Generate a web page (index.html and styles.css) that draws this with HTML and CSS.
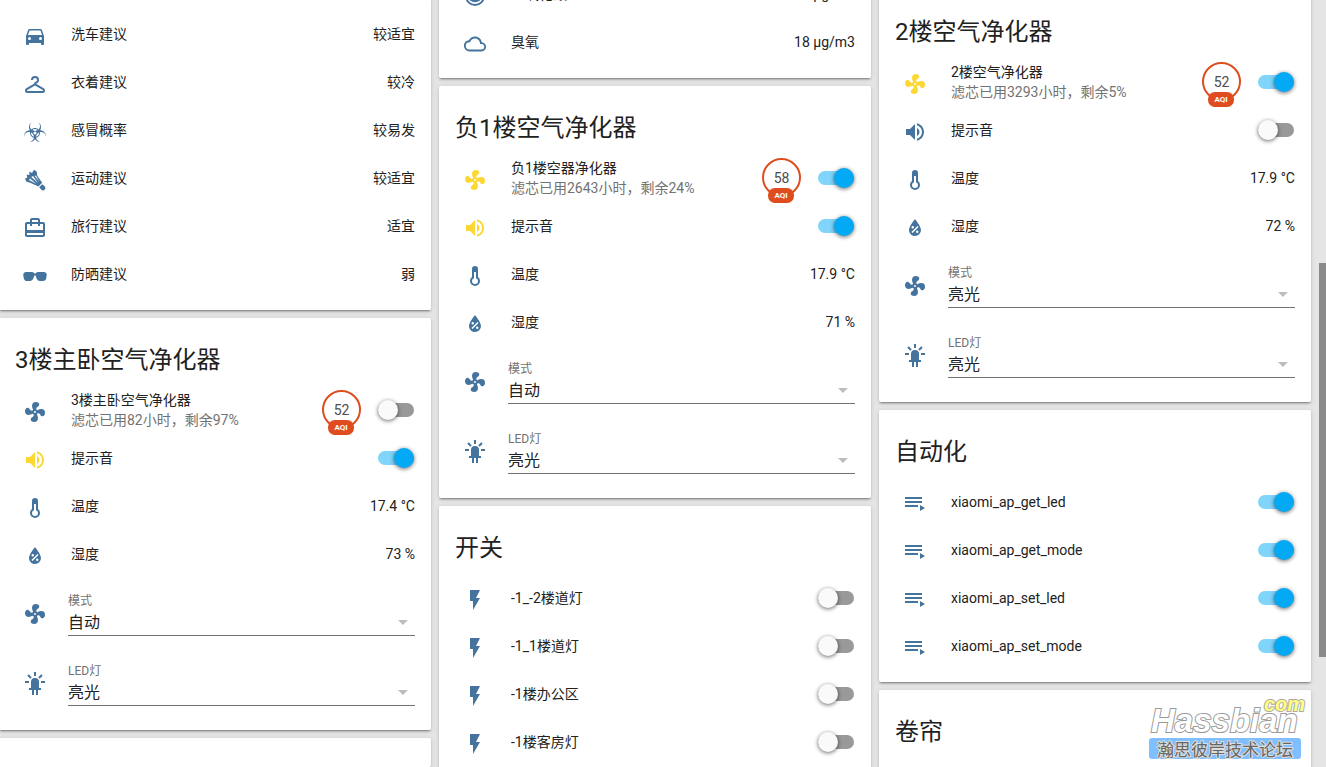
FILE: index.html
```html
<!DOCTYPE html>
<html lang="zh-CN">
<head>
<meta charset="utf-8">
<title>Home Assistant</title>
<link rel="stylesheet" href="styles.css">
</head>
<body>
<svg class="sprite" aria-hidden="true">
  <symbol id="car" viewBox="0 0 24 24"><path d="M5,11L6.5,6.5H17.5L19,11M17.5,16A1.5,1.5 0 0,1 16,14.5A1.5,1.5 0 0,1 17.5,13A1.5,1.5 0 0,1 19,14.5A1.5,1.5 0 0,1 17.5,16M6.5,16A1.5,1.5 0 0,1 5,14.5A1.5,1.5 0 0,1 6.5,13A1.5,1.5 0 0,1 8,14.5A1.5,1.5 0 0,1 6.5,16M18.92,6C18.72,5.42 18.16,5 17.5,5H6.5C5.84,5 5.28,5.42 5.08,6L3,12V20A1,1 0 0,0 4,21H5A1,1 0 0,0 6,20V19H18V20A1,1 0 0,0 19,21H20A1,1 0 0,0 21,20V12L18.92,6Z"/></symbol>
  <symbol id="hanger" viewBox="0 0 24 24"><path d="M20.76,16.34H20.75C21.5,16.77 22,17.58 22,18.5A2.5,2.5 0 0,1 19.5,21H4.5A2.5,2.5 0 0,1 2,18.5C2,17.58 2.5,16.77 3.25,16.34H3.24L11,11.86C11,11.86 11,11 12,10C13,10 14,9.1 14,8A2,2 0 0,0 12,6A2,2 0 0,0 10,8H8A4,4 0 0,1 12,4A4,4 0 0,1 16,8C16,9.86 14.73,11.42 13,11.87L20.76,16.34M4.5,19V19H19.5V19C19.67,19 19.84,18.91 19.93,18.75C20.07,18.5 20,18.21 19.75,18.07L12,13.59L4.25,18.07C4,18.21 3.93,18.5 4.07,18.75C4.16,18.91 4.33,19 4.5,19Z"/></symbol>
  <symbol id="biohazard" viewBox="0 0 24 24"><path d="M23,16.06C23,16.29 23,16.5 22.96,16.7C22.78,14.14 20.64,12.11 18,12.11C17.63,12.11 17.27,12.16 16.92,12.23C16.96,12.5 17,12.73 17,13C17,15.35 15.31,17.32 13.07,17.81C13.42,20.05 15.31,21.79 17.65,21.96C17.43,22 17.22,22 17,22C14.92,22 13.07,20.94 12,19.34C10.93,20.94 9.09,22 7,22C6.78,22 6.57,22 6.35,21.96C8.69,21.79 10.57,20.06 10.93,17.81C8.68,17.32 7,15.35 7,13C7,12.73 7.04,12.5 7.07,12.23C6.73,12.16 6.37,12.11 6,12.11C3.36,12.11 1.22,14.14 1.03,16.7C1,16.5 1,16.29 1,16.06C1,12.85 3.59,10.24 6.81,10.14C6.3,9.27 6,8.25 6,7.17C6,4.94 7.23,3 9.06,2C7.81,2.9 7,4.34 7,6C7,7.35 7.56,8.59 8.47,9.5C9.38,8.59 10.62,8.04 12,8.04C13.37,8.04 14.62,8.59 15.5,9.5C16.43,8.59 17,7.35 17,6C17,4.34 16.18,2.9 14.94,2C16.77,3 18,4.94 18,7.17C18,8.25 17.7,9.27 17.19,10.14C20.42,10.24 23,12.85 23,16.06M9.27,10.11C10.05,10.62 11,10.92 12,10.92C13,10.92 13.95,10.62 14.73,10.11C14,9.45 13.06,9.03 12,9.03C10.94,9.03 10,9.45 9.27,10.11M12,14.47C12.82,14.47 13.5,13.8 13.5,13A1.5,1.5 0 0,0 12,11.5A1.5,1.5 0 0,0 10.5,13C10.5,13.8 11.17,14.47 12,14.47M10.97,16.79C10.87,14.9 9.71,13.29 8.05,12.55C8.03,12.7 8,12.84 8,13C8,14.82 9.27,16.34 10.97,16.79M15.96,12.55C14.29,13.29 13.12,14.9 13,16.79C14.73,16.34 16,14.82 16,13C16,12.84 15.97,12.7 15.96,12.55Z"/></symbol>
  <symbol id="badminton" viewBox="0 0 24 24"><path fill-rule="evenodd" d="M2 10.400 4.200 9.800 3.700 6.400 6.300 7 6.400 3.500 9 5 11 1.800 13.800 3.800 14.200 7.800 19.200 14.800 15.400 18.600 7.200 14.800 3.200 13.600ZM6 12 13.500 15.900 7 10.600ZM8.200 9 14.900 15 10 7.900ZM11.800 8 16.300 13.900 13 7.600Z"/><path d="M19.200 16.200 21.600 18.200A2.400 2.400 0 0 1 18.400 21.800L16.200 19.300Z"/></symbol>
  <symbol id="travel" viewBox="0 0 24 24"><path d="M20,14H4V8H7V10H9V8H15V10H17V8H20M20,19H4V17H20M9,4H15V6H9M20,6H17V4C17,2.89 16.11,2 15,2H9C7.89,2 7,2.89 7,4V6H4C2.89,6 2,6.89 2,8V19C2,20.11 2.89,21 4,21H20C21.11,21 22,20.11 22,19V8C22,6.89 21.11,6 20,6Z"/></symbol>
  <symbol id="sunglasses" viewBox="0 0 24 24"><path d="M7,17H4C2.38,17 0.96,15.74 0.76,14.14L0.26,11.15C0.15,10.3 0.39,9.5 0.91,8.92C1.43,8.34 2.19,8 3,8H9C9.83,8 10.58,8.35 11.06,8.96C11.17,9.11 11.27,9.27 11.35,9.45C11.78,9.36 12.22,9.36 12.64,9.45C12.72,9.27 12.82,9.11 12.94,8.96C13.41,8.35 14.16,8 15,8H21C21.81,8 22.57,8.34 23.09,8.92C23.6,9.5 23.84,10.3 23.74,11.11L23.23,14.18C23.04,15.74 21.61,17 20,17H17C15.44,17 13.92,15.81 13.54,14.3L12.64,11.59C12.26,11.31 11.73,11.31 11.35,11.59L10.43,14.37C10.07,15.82 8.56,17 7,17Z"/></symbol>
  <symbol id="face" viewBox="0 0 24 24"><path fill-rule="evenodd" d="M12 2A10 10 0 1 0 12 22 10 10 0 0 0 12 2M12 4A8 8 0 1 1 12 20 8 8 0 0 1 12 4M7 14H17V16.500Q12 20 7 16.500Z"/></symbol>
  <symbol id="cloud" viewBox="-1 -1 26 26"><path d="M19,18H6A4,4 0 0,1 2,14A4,4 0 0,1 6,10H6.71C7.37,7.69 9.5,6 12,6A5.500,5.500 0 0,1 17.5,11.5V12H19A3,3 0 0,1 22,15A3,3 0 0,1 19,18M19.35,10.03C18.67,6.59 15.64,4 12,4C9.11,4 6.6,5.64 5.35,8.03C2.34,8.36 0,10.9 0,14A6,6 0 0,0 6,20H19A5,5 0 0,0 24,15C24,12.36 21.95,10.22 19.35,10.03Z"/></symbol>
  <symbol id="fan" viewBox="0 0 24 24"><path d="M12,11A1,1 0 0,0 11,12A1,1 0 0,0 12,13A1,1 0 0,0 13,12A1,1 0 0,0 12,11M12.5,2C17,2 17.11,5.57 14.75,6.75C13.76,7.24 13.32,8.29 13.13,9.22C13.61,9.42 14.03,9.73 14.35,10.13C18.05,8.13 22.03,8.92 22.03,12.5C22.03,17 18.46,17.1 17.28,14.73C16.78,13.74 15.72,13.3 14.79,13.11C14.59,13.59 14.28,14 13.88,14.34C15.87,18.03 15.08,22 11.5,22C7,22 6.91,18.42 9.27,17.24C10.25,16.75 10.69,15.71 10.89,14.79C10.4,14.59 9.97,14.27 9.65,13.87C5.96,15.85 2,15.07 2,11.5C2,7 5.56,6.89 6.74,9.26C7.24,10.25 8.29,10.68 9.22,10.87C9.41,10.39 9.73,9.97 10.14,9.65C8.15,5.96 8.94,2 12.5,2Z"/></symbol>
  <symbol id="volume" viewBox="0 0 24 24"><path d="M14,3.23V5.29C16.89,6.15 19,8.83 19,12C19,15.17 16.89,17.84 14,18.7V20.77C18,19.86 21,16.28 21,12C21,7.72 18,4.14 14,3.23M16.5,12C16.5,10.23 15.5,8.71 14,7.97V16C15.5,15.29 16.5,13.76 16.5,12M3,9V15H7L12,20V4L7,9H3Z"/></symbol>
  <symbol id="thermometer" viewBox="0 0 24 24"><path d="M17,17A5,5 0 0,1 12,22A5,5 0 0,1 7,17C7,15.36 7.79,13.91 9,13V5A3,3 0 0,1 12,2A3,3 0 0,1 15,5V13C16.21,13.91 17,15.36 17,17M11,8V14.17C9.83,14.58 9,15.69 9,17A3,3 0 0,0 12,20A3,3 0 0,0 15,17C15,15.69 14.17,14.58 13,14.17V8H11Z"/></symbol>
  <symbol id="humidity" viewBox="0 0 24 24"><path d="M12,3.25C12,3.25 6,10 6,14C6,17.32 8.69,20 12,20A6,6 0 0,0 18,14C18,10 12,3.25 12,3.25M14.47,9.97L15.53,11.03L9.53,17.03L8.47,15.97M9.75,10A1.25,1.25 0 0,1 11,11.25A1.25,1.25 0 0,1 9.75,12.5A1.25,1.25 0 0,1 8.5,11.25A1.25,1.25 0 0,1 9.75,10M14.25,14.5A1.25,1.25 0 0,1 15.5,15.75A1.25,1.25 0 0,1 14.25,17A1.25,1.25 0 0,1 13,15.75A1.25,1.25 0 0,1 14.25,14.5Z"/></symbol>
  <symbol id="led" viewBox="0 0 24 24"><path d="M11,0V4H13V0H11M18.3,2.29L15.24,5.29L16.64,6.71L19.7,3.71L18.3,2.29M5.71,2.29L4.29,3.71L7.29,6.71L8.71,5.29L5.71,2.29M12,6A4,4 0 0,0 8,10V16H6V18H9V23H11V18H13V23H15V18H18V16H16V10A4,4 0 0,0 12,6M2,9V11H6V9H2M18,9V11H22V9H18Z"/></symbol>
  <symbol id="flash" viewBox="0 0 24 24"><path d="M7,2V13H10V22L17,10H13L17,2H7Z"/></symbol>
  <symbol id="playlist" viewBox="0 0 24 24"><path d="M19,9H2V11H19V9M19,5H2V7H19V5M2,15H15V13H2V15M17,13V19L22,16L17,13Z"/></symbol>
</svg>

<main class="dashboard">
  <div class="column column-a">
    <section class="card card-continued">
      <div class="row"><svg class="icon"><use href="#car"/></svg><span class="name">洗车建议</span><span class="value">较适宜</span></div>
      <div class="row"><svg class="icon"><use href="#hanger"/></svg><span class="name">衣着建议</span><span class="value">较冷</span></div>
      <div class="row"><svg class="icon"><use href="#biohazard"/></svg><span class="name">感冒概率</span><span class="value">较易发</span></div>
      <div class="row"><svg class="icon"><use href="#badminton"/></svg><span class="name">运动建议</span><span class="value">较适宜</span></div>
      <div class="row"><svg class="icon"><use href="#travel"/></svg><span class="name">旅行建议</span><span class="value">适宜</span></div>
      <div class="row"><svg class="icon"><use href="#sunglasses"/></svg><span class="name">防晒建议</span><span class="value">弱</span></div>
    </section>
    <section class="card">
      <h2 class="title">3楼主卧空气净化器</h2>
      <div class="row"><svg class="icon"><use href="#fan"/></svg><label class="name" for="p3">3楼主卧空气净化器<span class="detail">滤芯已用82小时，剩余97%</span></label><span class="badge">52<span class="badge-unit">AQI</span></span><input class="toggle" type="checkbox" id="p3"></div>
      <div class="row"><svg class="icon icon-on"><use href="#volume"/></svg><label class="name" for="s3">提示音</label><input class="toggle" type="checkbox" id="s3" checked></div>
      <div class="row"><svg class="icon"><use href="#thermometer"/></svg><span class="name">温度</span><span class="value">17.4 °C</span></div>
      <div class="row"><svg class="icon"><use href="#humidity"/></svg><span class="name">湿度</span><span class="value">73 %</span></div>
      <div class="row row-select"><svg class="icon"><use href="#fan"/></svg><div class="field"><label class="field-label" for="m3">模式</label><select class="field-input" id="m3"><option>自动</option></select></div></div>
      <div class="row row-select"><svg class="icon"><use href="#led"/></svg><div class="field"><label class="field-label" for="l3">LED灯</label><select class="field-input" id="l3"><option>亮光</option></select></div></div>
    </section>
    <section class="card card-last"></section>
  </div>

  <div class="column column-b">
    <section class="card card-continued">
      <div class="row"><svg class="icon"><use href="#face"/></svg><span class="name">一氧化碳</span><span class="value">18 µg/m3</span></div>
      <div class="row"><svg class="icon"><use href="#cloud"/></svg><span class="name">臭氧</span><span class="value">18 µg/m3</span></div>
    </section>
    <section class="card">
      <h2 class="title">负1楼空气净化器</h2>
      <div class="row"><svg class="icon icon-on"><use href="#fan"/></svg><label class="name" for="p1">负1楼空器净化器<span class="detail">滤芯已用2643小时，剩余24%</span></label><span class="badge">58<span class="badge-unit">AQI</span></span><input class="toggle" type="checkbox" id="p1" checked></div>
      <div class="row"><svg class="icon icon-on"><use href="#volume"/></svg><label class="name" for="s1">提示音</label><input class="toggle" type="checkbox" id="s1" checked></div>
      <div class="row"><svg class="icon"><use href="#thermometer"/></svg><span class="name">温度</span><span class="value">17.9 °C</span></div>
      <div class="row"><svg class="icon"><use href="#humidity"/></svg><span class="name">湿度</span><span class="value">71 %</span></div>
      <div class="row row-select"><svg class="icon"><use href="#fan"/></svg><div class="field"><label class="field-label" for="m1">模式</label><select class="field-input" id="m1"><option>自动</option></select></div></div>
      <div class="row row-select"><svg class="icon"><use href="#led"/></svg><div class="field"><label class="field-label" for="l1">LED灯</label><select class="field-input" id="l1"><option>亮光</option></select></div></div>
    </section>
    <section class="card card-last">
      <h2 class="title">开关</h2>
      <div class="row"><svg class="icon"><use href="#flash"/></svg><label class="name" for="k1">-1_-2楼道灯</label><input class="toggle" type="checkbox" id="k1"></div>
      <div class="row"><svg class="icon"><use href="#flash"/></svg><label class="name" for="k2">-1_1楼道灯</label><input class="toggle" type="checkbox" id="k2"></div>
      <div class="row"><svg class="icon"><use href="#flash"/></svg><label class="name" for="k3">-1楼办公区</label><input class="toggle" type="checkbox" id="k3"></div>
      <div class="row"><svg class="icon"><use href="#flash"/></svg><label class="name" for="k4">-1楼客房灯</label><input class="toggle" type="checkbox" id="k4"></div>
    </section>
  </div>

  <div class="column column-c">
    <section class="card">
      <h2 class="title">2楼空气净化器</h2>
      <div class="row"><svg class="icon icon-on"><use href="#fan"/></svg><label class="name" for="p2">2楼空气净化器<span class="detail">滤芯已用3293小时，剩余5%</span></label><span class="badge">52<span class="badge-unit">AQI</span></span><input class="toggle" type="checkbox" id="p2" checked></div>
      <div class="row"><svg class="icon"><use href="#volume"/></svg><label class="name" for="s2">提示音</label><input class="toggle" type="checkbox" id="s2"></div>
      <div class="row"><svg class="icon"><use href="#thermometer"/></svg><span class="name">温度</span><span class="value">17.9 °C</span></div>
      <div class="row"><svg class="icon"><use href="#humidity"/></svg><span class="name">湿度</span><span class="value">72 %</span></div>
      <div class="row row-select"><svg class="icon"><use href="#fan"/></svg><div class="field"><label class="field-label" for="m2">模式</label><select class="field-input" id="m2"><option>亮光</option></select></div></div>
      <div class="row row-select"><svg class="icon"><use href="#led"/></svg><div class="field"><label class="field-label" for="l2">LED灯</label><select class="field-input" id="l2"><option>亮光</option></select></div></div>
    </section>
    <section class="card">
      <h2 class="title">自动化</h2>
      <div class="row"><svg class="icon"><use href="#playlist"/></svg><label class="name" for="a1">xiaomi_ap_get_led</label><input class="toggle" type="checkbox" id="a1" checked></div>
      <div class="row"><svg class="icon"><use href="#playlist"/></svg><label class="name" for="a2">xiaomi_ap_get_mode</label><input class="toggle" type="checkbox" id="a2" checked></div>
      <div class="row"><svg class="icon"><use href="#playlist"/></svg><label class="name" for="a3">xiaomi_ap_set_led</label><input class="toggle" type="checkbox" id="a3" checked></div>
      <div class="row"><svg class="icon"><use href="#playlist"/></svg><label class="name" for="a4">xiaomi_ap_set_mode</label><input class="toggle" type="checkbox" id="a4" checked></div>
    </section>
    <section class="card card-last">
      <h2 class="title">卷帘</h2>
    </section>
  </div>
</main>

<div class="scroll-thumb"></div>
<div class="watermark">
  <span class="watermark-com">com</span>
  <span class="watermark-name">Hassbian</span>
  <span class="watermark-tag">瀚思彼岸技术论坛</span>
</div>
</body>
</html>
```
FILE: styles.css
```css
* {
  box-sizing: border-box;
}

html,
body {
  height: 100%;
  margin: 0;
}

body {
  position: relative;
  overflow: hidden;
  background: #e5e5e5;
  color: #212121;
  font: 14px/20px Roboto, "Noto Sans CJK SC", sans-serif;
}

.sprite {
  display: none;
}

.dashboard {
  display: flex;
  gap: 8px;
  height: 100%;
  margin-left: -1px;
  padding-right: 15px;
}

.column {
  flex: 1;
  min-width: 0;
  display: flex;
  flex-direction: column;
  gap: 8px;
}

/* Each column is scrolled to a different point of its first card. */
.column-a {
  margin-top: -2px;
}

.column-b {
  margin-top: -42px;
}

.column-c {
  margin-top: -10px;
}

.card {
  flex: none;
  display: flex;
  flex-direction: column;
  gap: 8px;
  padding: 0 16px 16px;
  border-radius: 2px;
  background: #fff;
  box-shadow: 0 2px 2px 0 rgba(0, 0, 0, 0.14), 0 1px 5px 0 rgba(0, 0, 0, 0.12),
    0 3px 1px -2px rgba(0, 0, 0, 0.2);
}

.card-continued {
  padding-top: 16px;
}

.card-last {
  flex: 1 0 auto;
}

.title {
  margin: 0;
  padding: 22px 0 2px;
  font-size: 24px;
  font-weight: 400;
  line-height: 40px;
}

.row {
  display: flex;
  align-items: center;
  min-height: 40px;
}

.icon {
  flex: none;
  width: 40px;
  height: 28px;
  padding: 4px 8px 0;
  fill: #44739e;
}

.icon-on {
  fill: #fdd835;
}

.name {
  flex: 1;
  min-width: 0;
  padding-left: 16px;
}

.detail {
  display: block;
  color: #727272;
}

.value {
  padding-left: 16px;
}

.badge {
  position: relative;
  width: 39px;
  height: 39px;
  margin: 0 17px 1px 0;
  border: 2px solid #df4c1e;
  border-radius: 50%;
  background: #fff;
  color: #4c4c4c;
  line-height: 36px;
  text-align: center;
}

.badge-unit {
  position: absolute;
  bottom: -8px;
  left: 4px;
  width: 26px;
  height: 15px;
  border-radius: 7px;
  background: #df4c1e;
  color: #fff;
  font-size: 8px;
  font-weight: 700;
  line-height: 16px;
}

.toggle {
  appearance: none;
  position: relative;
  width: 36px;
  height: 14px;
  margin: 0 1px 0 0;
  border-radius: 7px;
  background: #999;
}

.toggle::before {
  content: "";
  position: absolute;
  top: -3px;
  left: 0;
  width: 20px;
  height: 20px;
  border-radius: 50%;
  background: #fafafa;
  box-shadow: 0 1px 4px rgba(0, 0, 0, 0.6);
}

.toggle:checked {
  background: #81d4fa;
}

.toggle:checked::before {
  left: 16px;
  background: #03a9f4;
}

.row-select {
  padding: 8px 0;
}

.row-select .icon {
  height: 26px;
  padding-top: 2px;
}

.field {
  position: relative;
  flex: 1;
  min-width: 0;
  display: flex;
  flex-direction: column;
  margin-left: 13px;
}

.field::after {
  content: "";
  position: absolute;
  right: 7px;
  bottom: 11px;
  border: 5px solid transparent;
  border-top-color: #bdbdbd;
  border-bottom: 0;
  pointer-events: none;
}

.field-label {
  padding-top: 3px;
  color: #727272;
  font-size: 12px;
  line-height: 17px;
}

.field-input {
  appearance: none;
  width: 100%;
  height: 26px;
  padding: 0;
  border: 0;
  border-bottom: 1px solid #727272;
  border-radius: 0;
  background: transparent;
  color: #212121;
  font: 16px/24px Roboto, "Noto Sans CJK SC", sans-serif;
}

.scroll-thumb {
  position: absolute;
  top: 263px;
  right: 0;
  width: 7px;
  height: 394px;
  background: #8a8a8a;
}

.watermark {
  position: absolute;
  right: 21px;
  bottom: 8px;
  display: flex;
  flex-direction: column;
  width: 156px;
  font-family: "Liberation Sans", sans-serif;
  font-style: italic;
  font-weight: 700;
}

.watermark-com {
  align-self: flex-end;
  margin-bottom: -5px;
  color: #ffff80;
  font-size: 20px;
  line-height: 16px;
  -webkit-text-stroke: 2px #aaa;
  paint-order: stroke fill;
}

.watermark-name {
  padding: 0 0 3px 2px;
  color: #fff;
  font-size: 33px;
  line-height: 28px;
  -webkit-text-stroke: 2px #999;
  paint-order: stroke fill;
}

.watermark-tag {
  width: 152px;
  border-radius: 3px;
  background: #80bfff;
  color: #666;
  font: 17px/21px "Noto Sans CJK SC", sans-serif;
  text-align: center;
  -webkit-text-stroke: 2px #ddd;
  paint-order: stroke fill;
}
```
